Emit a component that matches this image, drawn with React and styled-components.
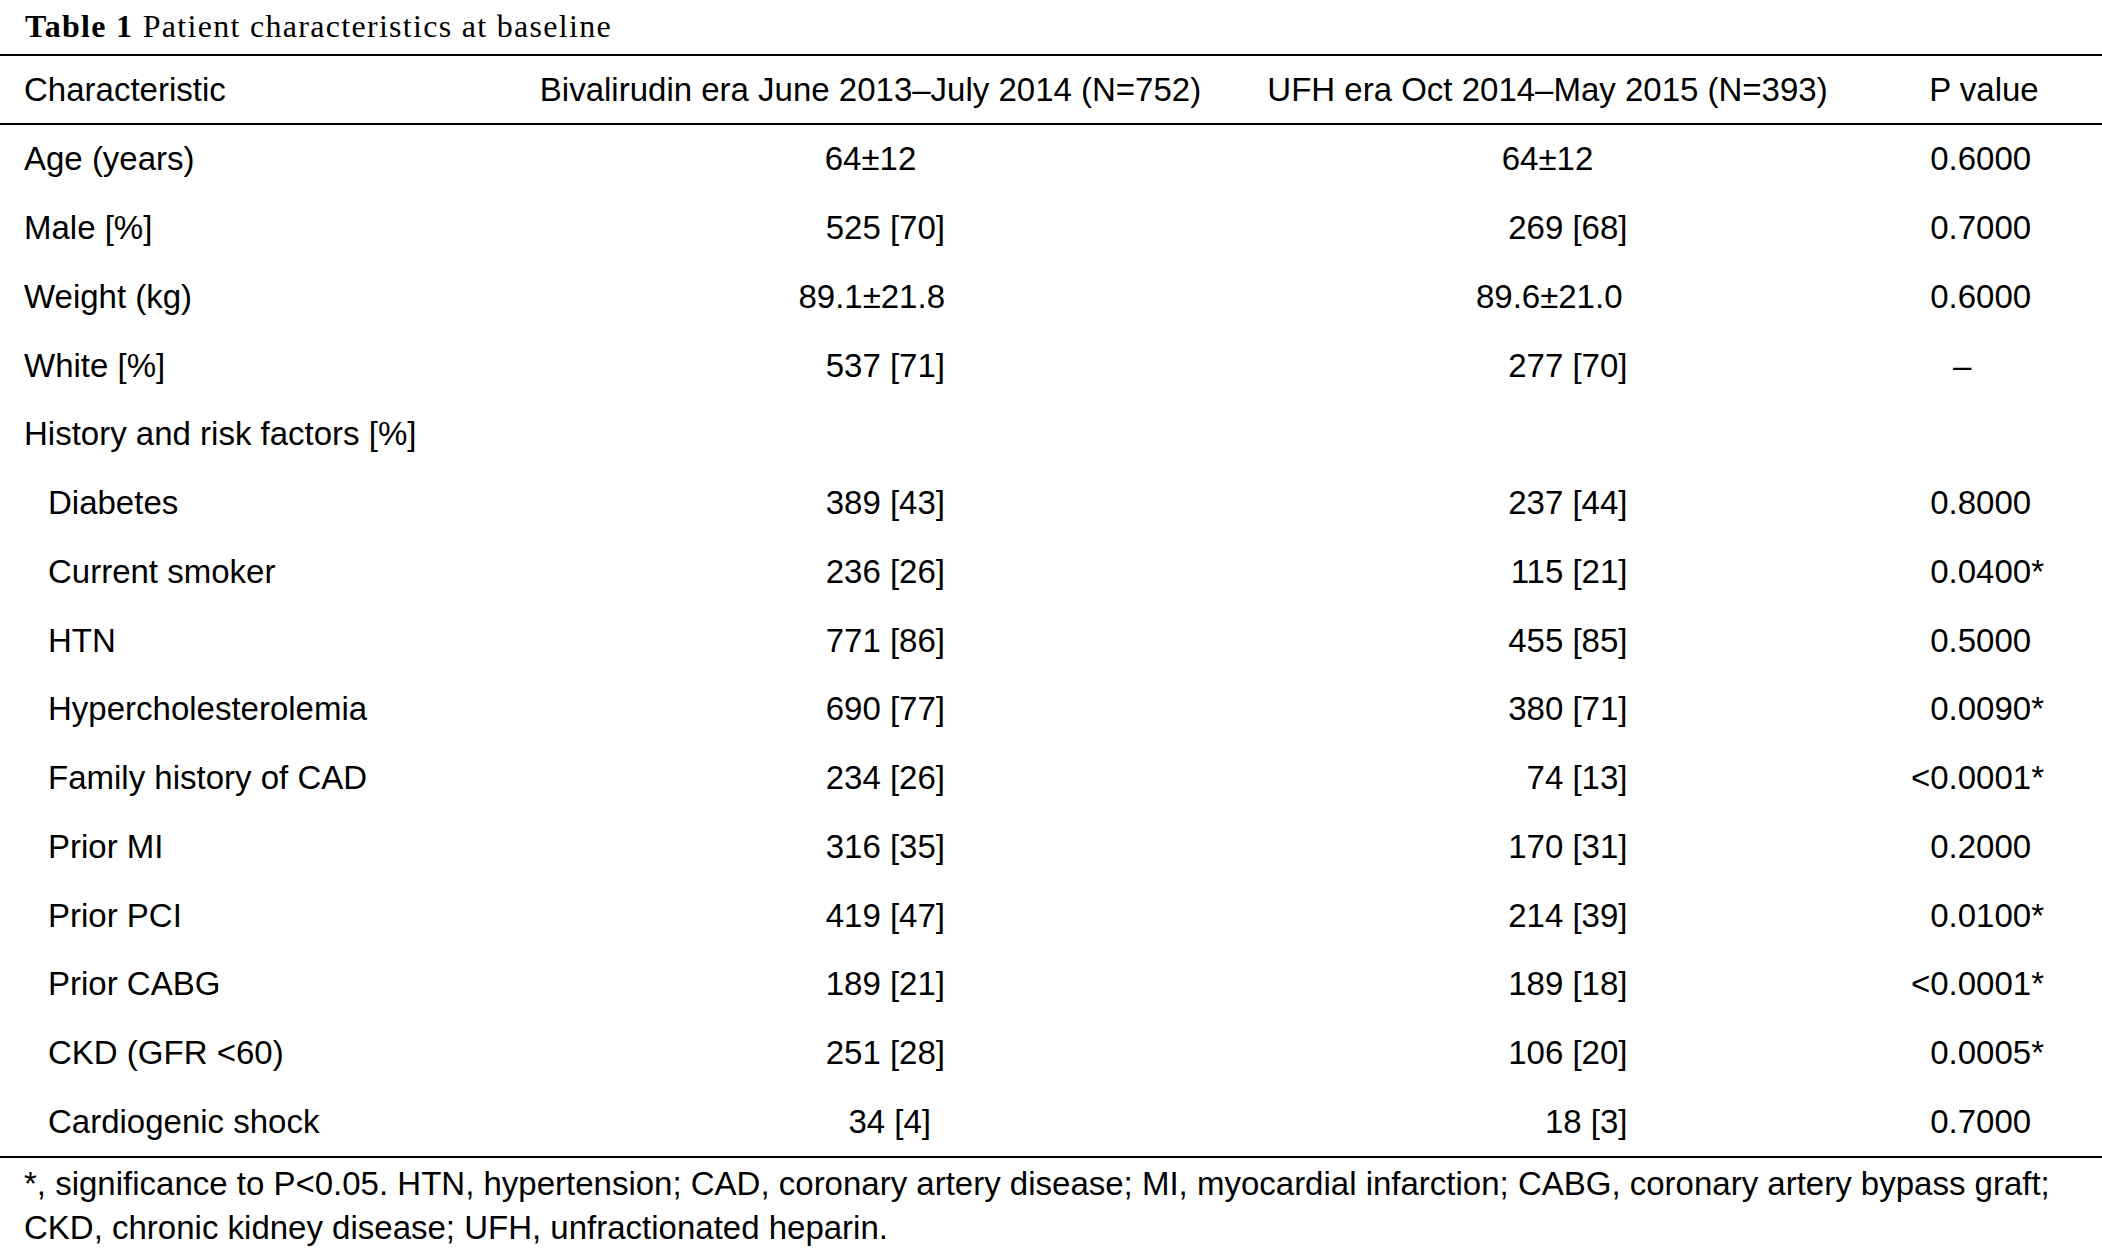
import React from 'react';
import styled, { createGlobalStyle } from 'styled-components';

const GlobalStyle = createGlobalStyle`
    html, body {
        margin: 0;
        padding: 0;
        background: #fff;
    }
    body {
        font-family: "Liberation Sans", Arial, Helvetica, sans-serif;
        color: #000;
    }
`;

const Page = styled.div`
    width: 2102px;
    display: flex;
    flex-direction: column;
`;

const Caption = styled.div`
    height: 54px;
    padding-left: 25px;
    padding-top: 6px;
    box-sizing: border-box;
    font-family: "Liberation Serif", "Times New Roman", serif;
    font-size: 32px;
    letter-spacing: 1.3px;
    line-height: 40px;

    & > b {
        font-weight: bold;
    }
`;

const Table = styled.div`
    border-top: 2px solid #000;
    border-bottom: 2px solid #000;
`;

const Row = styled.div`
    display: grid;
    grid-template-columns: 530px 681px 673px 200px;
    align-items: center;
    height: ${props => props.$head ? '67px' : '68.75px'};
    font-size: 33px;
    border-bottom: ${props => props.$head ? '2px solid #000' : 'none'};
`;

const Label = styled.div`
    padding-left: ${props => props.$sub ? '48px' : '24px'};
    white-space: nowrap;
`;

const Cell = styled.div`
    text-align: center;
    white-space: nowrap;
`;

const NumBox = styled.span`
    display: inline-block;
    width: ${props => props.$w}px;
    text-align: right;
    box-sizing: border-box;
`;

const PCell = styled.div`
    padding-left: 20px;
    white-space: nowrap;
`;

const PBox = styled.span`
    display: inline-block;
    width: 140px;
    text-align: ${props => props.$dash ? 'left' : 'right'};
    padding-left: ${props => props.$dash ? '49px' : '0'};
    box-sizing: border-box;
`;

const Star = styled.span`
    visibility: ${props => props.$off ? 'hidden' : 'visible'};
`;

const Note = styled.div`
    padding: 4px 0 0 24px;
    font-size: 33px;
    line-height: 44px;
    white-space: nowrap;
`;

const rows = [
    { label: 'Age (years)', a: '64±12', b: '64±12', p: '0.6000', plain: true },
    { label: 'Male [%]', a: '525 [70]', b: '269 [68]', p: '0.7000' },
    { label: 'Weight (kg)', a: '89.1±21.8', b: '89.6±21.0', p: '0.6000', padB: 5 },
    { label: 'White [%]', a: '537 [71]', b: '277 [70]', p: '–' },
    { label: 'History and risk factors [%]', group: true },
    { label: 'Diabetes', sub: true, a: '389 [43]', b: '237 [44]', p: '0.8000' },
    { label: 'Current smoker', sub: true, a: '236 [26]', b: '115 [21]', p: '0.0400*' },
    { label: 'HTN', sub: true, a: '771 [86]', b: '455 [85]', p: '0.5000' },
    { label: 'Hypercholesterolemia', sub: true, a: '690 [77]', b: '380 [71]', p: '0.0090*' },
    { label: 'Family history of CAD', sub: true, a: '234 [26]', b: '74 [13]', p: '<0.0001*' },
    { label: 'Prior MI', sub: true, a: '316 [35]', b: '170 [31]', p: '0.2000' },
    { label: 'Prior PCI', sub: true, a: '419 [47]', b: '214 [39]', p: '0.0100*' },
    { label: 'Prior CABG', sub: true, a: '189 [21]', b: '189 [18]', p: '<0.0001*' },
    { label: 'CKD (GFR <60)', sub: true, a: '251 [28]', b: '106 [20]', p: '0.0005*' },
    { label: 'Cardiogenic shock', sub: true, a: '34 [4]', b: '18 [3]', p: '0.7000', padA: 14 },
];

const Num = ({ value, plain, w, pad }) => {
    if (plain) return <Cell>{value}</Cell>;
    return (
        <Cell>
            <NumBox $w={w} style={pad ? { paddingRight: pad } : undefined}>{value}</NumBox>
        </Cell>
    );
};

const PValue = ({ value }) => {
    if (value === '–') {
        return <PCell><PBox $dash>{value}</PBox></PCell>;
    }
    const starred = value.endsWith('*');
    const num = starred ? value.slice(0, -1) : value;
    return (
        <PCell>
            <PBox>{num}<Star $off={!starred}>*</Star></PBox>
        </PCell>
    );
};

const App = () => {
    return (
        <Page>
            <GlobalStyle />
            <Caption><b>Table 1</b> Patient characteristics at baseline</Caption>
            <Table>
                <Row $head>
                    <Label>Characteristic</Label>
                    <Cell>Bivalirudin era June 2013–July 2014 (N=752)</Cell>
                    <Cell>UFH era Oct 2014–May 2015 (N=393)</Cell>
                    <Cell>P value</Cell>
                </Row>
                {rows.map(r => (
                    r.group ? (
                        <Row key={r.label}>
                            <Label>{r.label}</Label>
                        </Row>
                    ) : (
                        <Row key={r.label}>
                            <Label $sub={r.sub}>{r.label}</Label>
                            <Num value={r.a} plain={r.plain} w={149} pad={r.padA} />
                            <Num value={r.b} plain={r.plain} w={160} pad={r.padB} />
                            <PValue value={r.p} />
                        </Row>
                    )
                ))}
            </Table>
            <Note>
                *, significance to P&lt;0.05. HTN, hypertension; CAD, coronary artery disease; MI, myocardial infarction; CABG, coronary artery bypass graft;
                <br />
                CKD, chronic kidney disease; UFH, unfractionated heparin.
            </Note>
        </Page>
    );
};

export default App;
